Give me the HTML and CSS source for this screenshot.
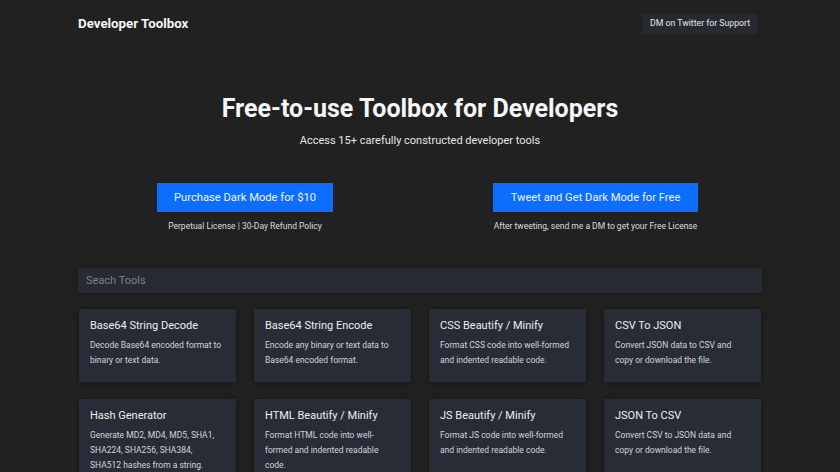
FILE: index.html
```html
<!DOCTYPE html>
<html>
<head>
<meta charset="utf-8">
<link rel="stylesheet" href="styles.css">
</head>
<body>
<div class="page">
  <header class="topbar">
    <div class="brand">Developer Toolbox</div>
    <a class="support">DM on Twitter for Support</a>
  </header>
  <section class="hero">
    <h1>Free-to-use Toolbox for Developers</h1>
    <p class="sub">Access 15+ carefully constructed developer tools</p>
    <div class="ctas">
      <div class="cta cta-buy">
        <a class="btn">Purchase Dark Mode for $10</a>
        <div class="note">Perpetual License | 30-Day Refund Policy</div>
      </div>
      <div class="cta cta-tweet">
        <a class="btn">Tweet and Get Dark Mode for Free</a>
        <div class="note">After tweeting, send me a DM to get your Free License</div>
      </div>
    </div>
  </section>
  <div class="search">Seach Tools</div>
  <div class="grid">
    <div class="card"><div class="title">Base64 String Decode</div><div class="desc">Decode Base64 encoded format to binary or text data.</div></div>
    <div class="card"><div class="title">Base64 String Encode</div><div class="desc">Encode any binary or text data to Base64 encoded format.</div></div>
    <div class="card"><div class="title">CSS Beautify / Minify</div><div class="desc">Format CSS code into well-formed and indented readable code.</div></div>
    <div class="card"><div class="title">CSV To JSON</div><div class="desc">Convert JSON data to CSV and copy or download the file.</div></div>
    <div class="card"><div class="title">Hash Generator</div><div class="desc">Generate MD2, MD4, MD5, SHA1, SHA224, SHA256, SHA384, SHA512 hashes from a string.</div></div>
    <div class="card"><div class="title">HTML Beautify / Minify</div><div class="desc">Format HTML code into well-formed and indented readable code.</div></div>
    <div class="card"><div class="title">JS Beautify / Minify</div><div class="desc">Format JS code into well-formed and indented readable code.</div></div>
    <div class="card"><div class="title">JSON To CSV</div><div class="desc">Convert CSV to JSON data and copy or download the file.</div></div>
  </div>
</div>
</body>
</html>
```
FILE: styles.css
```css
* { box-sizing: border-box; }
html, body {
  margin: 0;
  background: #212121;
  color: #f2f2f2;
  font-family: Roboto, "Liberation Sans", Arial, sans-serif;
}
.page {
  width: 684px;
  margin: 0 auto;
}
.topbar {
  display: flex;
  justify-content: space-between;
  align-items: center;
  height: 46px;
  padding-top: 1px;
}
.brand {
  font-size: 13.3px;
  font-weight: 700;
  color: #f5f5f5;
}
.support {
  font-size: 8.7px;
  color: #e6e6e6;
  background: #262930;
  padding: 4px 7px 5px 8px;
  margin-right: 5px;
  line-height: 11px;
}
.hero {
  text-align: center;
  padding-top: 48px;
}
.hero h1 {
  margin: 0;
  font-size: 25px;
  font-weight: 700;
  line-height: 30px;
  color: #f7f7f7;
}
.sub {
  margin: 9px 0 0;
  font-size: 11px;
  line-height: 16px;
  color: #e6e6e6;
}
.ctas {
  display: flex;
  justify-content: center;
  gap: 160px;
  margin-top: 34px;
  padding-left: 15px;
}
.cta {
  display: flex;
  flex-direction: column;
  align-items: center;
}
.cta-buy { width: 176px; }
.cta-tweet { width: 205px; }
.btn {
  display: block;
  width: 100%;
  background: #0d6efd;
  color: #eef3ff;
  font-size: 11.2px;
  line-height: 15px;
  padding: 7px 0;
  text-align: center;
}
.note {
  margin-top: 8px;
  font-size: 8.5px;
  line-height: 12px;
  color: #dcdcdc;
  white-space: nowrap;
}
.search {
  margin-top: 36px;
  height: 25px;
  background: #272a32;
  color: #7e828b;
  font-size: 11px;
  line-height: 25px;
  padding-left: 8px;
  box-shadow: 0 0 6px rgba(0,0,0,0.35);
}
.grid {
  display: grid;
  grid-template-columns: repeat(4, 157px);
  column-gap: 18px;
  row-gap: 17px;
  margin-top: 16px;
  padding-left: 1px;
}
.card {
  background: #282c36;
  padding: 10px 11px 14px;
  min-height: 73px;
  box-shadow: 0 0 6px rgba(0,0,0,0.4);
}
.title {
  font-size: 11px;
  line-height: 14px;
  color: #eeeeee;
}
.desc {
  margin-top: 5px;
  font-size: 8.5px;
  line-height: 15px;
  color: #d2d4d8;
}
```
